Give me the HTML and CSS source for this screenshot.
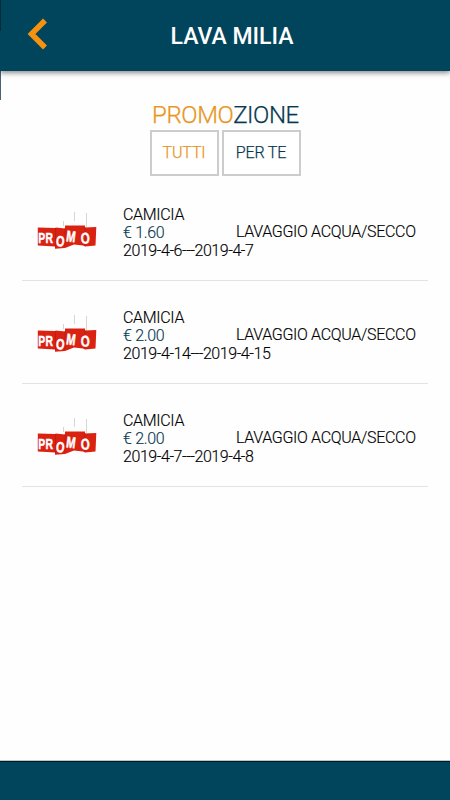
FILE: index.html
```html
<!DOCTYPE html>
<html lang="it">
<head>
    <meta charset="UTF-8">
    <meta name="viewport" content="width=device-width, initial-scale=1.0">
    <title>Lava Milia - Promozione</title>
    <link rel="stylesheet" href="styles.css">
</head>
<body>
    <!-- Logo promo, usato in ogni riga -->
    <svg class="symbols">
        <symbol id="promo" viewBox="0 0 60 44">
            <path d="M26.500 15V20M37.500 6V15M49.500 7V21" stroke="#c4c4c4" stroke-width="0.7"/>
            <path d="M0.800 21.500L18.500 22V21.500L28 22.500V19.500H48V21.500L59.300 21L58.500 39.500L48 40.500L46 39.500L37 38.500L28 42L18 42.700V40.500L0.800 39.500Z" fill="#d92212"/>
            <path d="M18.500 22V41M28 22V40M48 21V39" stroke="#b51a0e" stroke-width="0.7"/>
            <g class="promo-text">
                <text transform="translate(1.300 36.800) scale(0.67 1)">P</text>
                <text transform="translate(8.500 37.300) scale(0.67 1)">R</text>
                <text transform="translate(18.700 40) rotate(4) scale(0.7 0.95)">O</text>
                <text transform="translate(28.800 35.300) rotate(7) scale(0.72 1)">M</text>
                <text transform="translate(44 37.800) rotate(-2) scale(0.74 1)">O</text>
            </g>
        </symbol>
    </svg>

    <div class="app">
        <header class="header">
            <a class="back" href="#">
                <svg width="20" height="32" viewBox="0 0 20 32">
                    <path d="M18 2.500L4.500 16L18 29.500" fill="none" stroke="#f7920f" stroke-width="5.500"/>
                </svg>
            </a>
            <h1>LAVA MILIA</h1>
        </header>

        <main class="content">
            <h2 class="title"><span>PROMO</span>ZIONE</h2>
            <div class="tabs">
                <button class="tab active">TUTTI</button>
                <button class="tab">PER TE</button>
            </div>

            <div class="list">
                <div class="item">
                    <svg class="logo"><use href="#promo"/></svg>
                    <div class="info">
                        <div>CAMICIA</div>
                        <div class="price">€ 1.60</div>
                        <div class="dates">2019-4-6---2019-4-7</div>
                    </div>
                    <div class="service">LAVAGGIO ACQUA/SECCO</div>
                </div>
                <div class="item">
                    <svg class="logo"><use href="#promo"/></svg>
                    <div class="info">
                        <div>CAMICIA</div>
                        <div class="price">€ 2.00</div>
                        <div class="dates">2019-4-14---2019-4-15</div>
                    </div>
                    <div class="service">LAVAGGIO ACQUA/SECCO</div>
                </div>
                <div class="item">
                    <svg class="logo"><use href="#promo"/></svg>
                    <div class="info">
                        <div>CAMICIA</div>
                        <div class="price">€ 2.00</div>
                        <div class="dates">2019-4-7---2019-4-8</div>
                    </div>
                    <div class="service">LAVAGGIO ACQUA/SECCO</div>
                </div>
            </div>
        </main>

        <footer class="footer"></footer>
    </div>
</body>
</html>
```

FILE: styles.css
```css
* {
    box-sizing: border-box;
}

body {
    margin: 0;
    font-family: Roboto, "Liberation Sans", sans-serif;
    font-size: 16px;
    font-weight: 300;
    color: #000;
    background-color: #fefefe;
}

.symbols {
    display: none;
}

.app {
    display: flex;
    flex-direction: column;
    height: 800px;
    overflow: hidden;
    background: linear-gradient(#4b6272, #4b6272) 0 0 / 1px 100px no-repeat;
}

.header {
    display: grid;
    grid-template-columns: 64px 1fr 50px;
    align-items: center;
    height: 71px;
    flex-shrink: 0;
    background: linear-gradient(#022c3c, #022c3c) 0 0 / 1px 31px no-repeat #01455d;
    box-shadow: 0 2px 5px rgba(0, 0, 0, 0.45);
}

.back {
    height: 32px;
    padding-left: 27px;
    margin-bottom: 4px;
}

.back svg {
    display: block;
}

.header h1 {
    margin: 0;
    font-size: 23px;
    font-weight: 500;
    line-height: 71px;
    padding-top: 1px;
    text-align: center;
    color: #fff;
}

.content {
    flex: 1;
    padding: 30px 22px 0;
}

.title {
    margin: 0;
    padding-left: 1px;
    font-size: 24px;
    font-weight: 300;
    line-height: 29px;
    letter-spacing: -0.4px;
    text-align: center;
    color: #083850;
    -webkit-text-stroke: 0.25px;
}

.title span {
    color: #e8951c;
}

.tabs {
    display: flex;
    justify-content: center;
    gap: 3px;
}

.tab {
    height: 46px;
    width: 69px;
    padding: 0 0 2px;
    font-family: inherit;
    font-size: 16px;
    font-weight: 300;
    letter-spacing: -0.15px;
    color: #083850;
    background-color: #fff;
    border: 2px solid #ccc;
    -webkit-text-stroke: 0.25px;
}

.tab + .tab {
    width: 79px;
}

.tab.active {
    color: #e8951c;
}

.list {
    padding-top: 2px;
}

.item {
    display: flex;
    height: 103px;
    padding: 28px 0 0 15px;
    line-height: 18px;
    letter-spacing: -0.32px;
    border-bottom: 1px solid #e4e4e4;
}

.logo {
    width: 60px;
    height: 44px;
}

.promo-text {
    font-family: "Liberation Sans", sans-serif;
    font-size: 15.5px;
    font-weight: bold;
    letter-spacing: 0;
    fill: #fff;
    stroke: #fff;
    stroke-width: 0.5px;
}

.info {
    width: 113px;
    margin-left: 26px;
    white-space: nowrap;
    -webkit-text-stroke: 0.15px;
}

.price {
    color: #083850;
}

.dates {
    letter-spacing: -0.43px;
}

.service {
    padding-top: 17px;
    white-space: nowrap;
    -webkit-text-stroke: 0.15px;
}

.footer {
    height: 40px;
    flex-shrink: 0;
    background-color: #01455d;
    border-top: 1px solid #b9c6cc;
    box-shadow: inset 0 1px 0 #001820;
}
```
